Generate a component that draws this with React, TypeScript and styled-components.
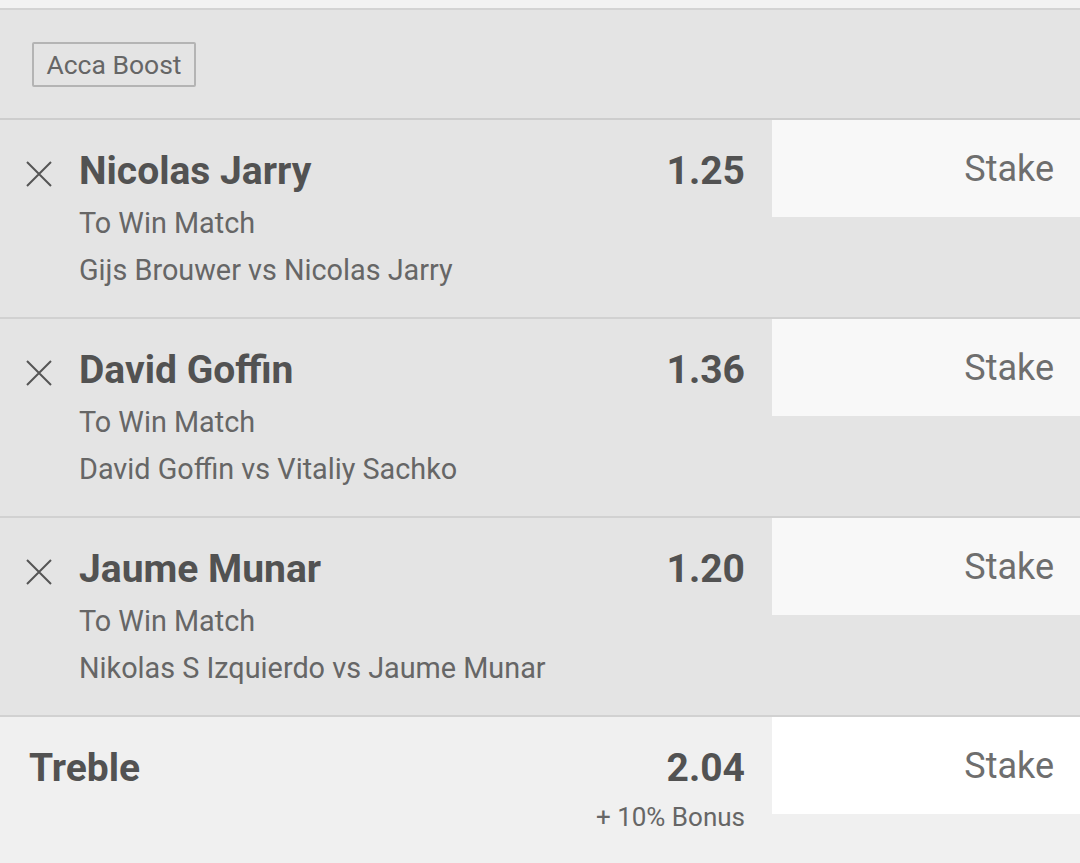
import styled, { createGlobalStyle } from 'styled-components';

type Selection = {
  id: number;
  name: string;
  market: string;
  event: string;
  odds: string;
};

const selections: Selection[] = [
  { id: 1, name: 'Nicolas Jarry', market: 'To Win Match', event: 'Gijs Brouwer vs Nicolas Jarry', odds: '1.25' },
  { id: 2, name: 'David Goffin', market: 'To Win Match', event: 'David Goffin vs Vitaliy Sachko', odds: '1.36' },
  { id: 3, name: 'Jaume Munar', market: 'To Win Match', event: 'Nikolas S Izquierdo vs Jaume Munar', odds: '1.20' },
];

const CloseIcon = () => (
  <svg width="26" height="26" viewBox="0 0 26 26" aria-hidden="true">
    <path d="M1 1 L25 25 M25 1 L1 25" stroke="#555555" strokeWidth="2" fill="none" />
  </svg>
);

export default function App() {
  return (
    <>
      <GlobalStyle />
      <Slip>
        <TopStrip />
        <BoostBar>
          <BoostButton type="button">Acca Boost</BoostButton>
        </BoostBar>

        {selections.map((s) => (
          <Row key={s.id}>
            <Info>
              <Remove type="button" aria-label="Remove selection">
                <CloseIcon />
              </Remove>
              <Details>
                <Name>{s.name}</Name>
                <Sub>{s.market}</Sub>
                <Sub>{s.event}</Sub>
              </Details>
              <Odds>{s.odds}</Odds>
            </Info>
            <StakeBox $bg="#f8f8f8">Stake</StakeBox>
          </Row>
        ))}

        <Multiple>
          <Info $pad="30px">
            <Details>
              <Name>Treble</Name>
            </Details>
            <OddsCol>
              <Odds>2.04</Odds>
              <Bonus>+ 10% Bonus</Bonus>
            </OddsCol>
          </Info>
          <StakeBox $bg="#ffffff">Stake</StakeBox>
        </Multiple>
      </Slip>
    </>
  );
}

const GlobalStyle = createGlobalStyle`
  html, body {
    margin: 0;
    padding: 0;
    background: #f0f0f0;
  }
  body {
    font-family: Roboto, "Noto Sans", Arial, sans-serif;
  }
`;

const Slip = styled.div`
  width: 1080px;
  height: 863px;
  overflow: hidden;
  background: #f0f0f0;
`;

const TopStrip = styled.div`
  height: 8px;
  background: #f2f2f2;
  border-bottom: 2px solid #d3d3d3;
`;

const BoostBar = styled.div`
  height: 76px;
  padding: 32px 0 0 32px;
  background: #e4e4e4;
  border-bottom: 2px solid #cdcdcd;
`;

const BoostButton = styled.button`
  height: 45px;
  width: 164px;
  padding: 0;
  border: 2px solid #b4b4b4;
  border-radius: 2px;
  background: transparent;
  font-family: Roboto, "Noto Sans", Arial, sans-serif;
  font-size: 26.5px;
  color: #666666;
  cursor: pointer;
`;

const Row = styled.div`
  display: grid;
  grid-template-columns: 1fr 308px;
  height: 197px;
  background: #e4e4e4;
  border-bottom: 2px solid #d1d1d1;
`;

const Info = styled.div<{ $pad?: string }>`
  display: flex;
  align-items: flex-start;
  padding: 25px 27px 0 ${(p) => p.$pad ?? '26px'};
`;

const Remove = styled.button`
  flex: none;
  width: 26px;
  height: 26px;
  margin: 16px 28px 0 0;
  padding: 0;
  border: none;
  background: none;
  display: flex;
  cursor: pointer;
`;

const Details = styled.div`
  flex: 1;
  display: flex;
  flex-direction: column;
  margin-left: -1px;
`;

const Name = styled.div`
  font-size: 39px;
  line-height: 52px;
  margin-bottom: 3px;
  font-weight: 700;
  color: #525252;
`;

const Sub = styled.div`
  font-size: 28.8px;
  line-height: 47px;
  color: #666666;
`;

const Odds = styled.div`
  font-size: 39px;
  line-height: 52px;
  font-weight: 700;
  color: #525252;
  text-align: right;
`;

const OddsCol = styled.div`
  display: flex;
  flex-direction: column;
  align-items: flex-end;
`;

const Bonus = styled.div`
  font-size: 26px;
  line-height: 46px;
  color: #666666;
`;

const StakeBox = styled.div<{ $bg: string }>`
  height: 97px;
  display: flex;
  align-items: center;
  justify-content: flex-end;
  padding-right: 26px;
  background: ${(p) => p.$bg};
  font-size: 36px;
  color: #6e6e6e;
`;

const Multiple = styled.div`
  display: grid;
  grid-template-columns: 1fr 308px;
  height: 146px;
  background: #f0f0f0;
`;
